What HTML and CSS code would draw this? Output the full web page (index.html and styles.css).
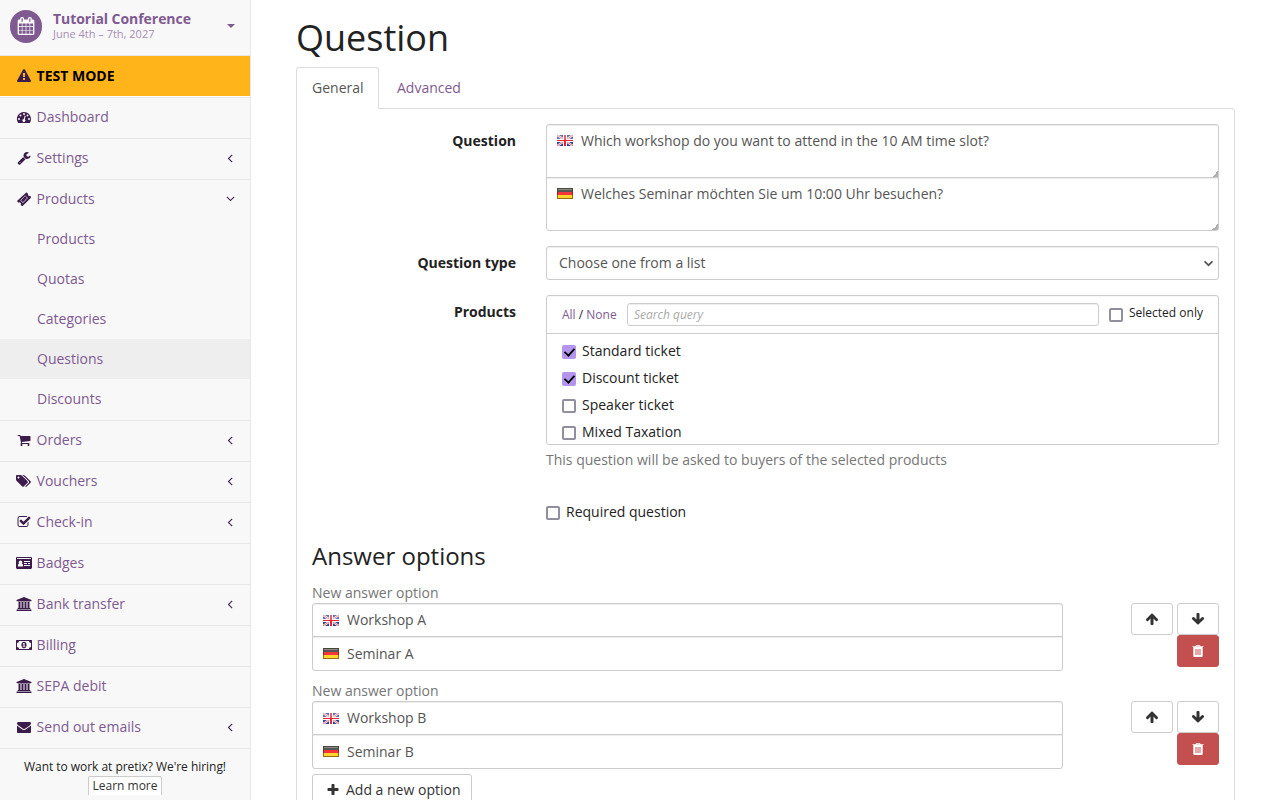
FILE: index.html
```html
<!DOCTYPE html>
<html lang="en">
<head>
<meta charset="utf-8">
<title>Question</title>
<link rel="stylesheet" href="styles.css">
</head>
<body>
<svg class="defs" aria-hidden="true">
  <symbol id="calendar" viewBox="0 0 1792 1792"><path d="M192 1664h288v-288h-288v288zm352 0h320v-288h-320v288zm-352-352h288v-320h-288v320zm352 0h320v-320h-320v320zm-352-384h288v-288h-288v288zm736 736h320v-288h-320v288zm-384-736h320v-288h-320v288zm768 736h288v-288h-288v288zm-384-352h320v-320h-320v320zm-352-864v-288q0-13-9.500-22.500t-22.500-9.500h-64q-13 0-22.500 9.500t-9.500 22.500v288q0 13 9.500 22.500t22.500 9.500h64q13 0 22.500-9.500t9.500-22.500zm736 864h288v-320h-288v320zm-384-384h320v-288h-320v288zm384 0h288v-288h-288v288zm32-480v-288q0-13-9.500-22.500t-22.500-9.500h-64q-13 0-22.500 9.500t-9.500 22.500v288q0 13 9.500 22.500t22.500 9.500h64q13 0 22.500-9.500t9.500-22.500zm384-64v1280q0 52-38 90t-90 38h-1408q-52 0-90-38t-38-90v-1280q0-52 38-90t90-38h128v-96q0-66 47-113t113-47h64q66 0 113 47t47 113v96h384v-96q0-66 47-113t113-47h64q66 0 113 47t47 113v96h128q52 0 90 38t38 90z"/></symbol>
  <symbol id="warning" viewBox="0 0 1792 1792"><path d="M1024 1375v-190q0-14-9.500-23.500t-22.500-9.500h-192q-13 0-22.500 9.500t-9.500 23.500v190q0 14 9.500 23.500t22.500 9.500h192q13 0 22.500-9.500t9.500-23.500zm-2-374l18-459q0-12-10-19-13-11-24-11h-220q-11 0-24 11-10 7-10 21l17 457q0 10 10 16.500t24 6.500h185q14 0 23.500-6.500t10.500-16.500zm-14-934l768 1408q35 63-2 126-17 29-46.500 46t-63.500 17h-1536q-34 0-63.500-17t-46.500-46q-37-63-2-126l768-1408q17-31 47-49t65-18 65 18 47 49z"/></symbol>
  <symbol id="gauge" viewBox="0 0 14 14"><path fill-rule="evenodd" d="M7 2a7 7 0 0 1 7 7c0 1.400-.4 2.600-1 3.700-.1.200-.3.300-.5.300h-11c-.2 0-.4-.1-.5-.3A7 7 0 0 1 7 2zM2 8a1 1 0 1 0 0 2 1 1 0 0 0 0-2zM3.500 4.500a1 1 0 1 0 0 2 1 1 0 0 0 0-2zM7 3a1 1 0 1 0 0 2 1 1 0 0 0 0-2zM10.500 4.500a1 1 0 1 0 0 2 1 1 0 0 0 0-2zM12 8a1 1 0 1 0 0 2 1 1 0 0 0 0-2zM7.600 5.900l-.8 3.100a1.500 1.500 0 1 0 1 .3l.8-3.100c.1-.7-.9-.9-1-.3z"/></symbol>
  <symbol id="wrench" viewBox="0 0 1792 1792"><path d="M448 1472q0-26-19-45t-45-19-45 19-19 45 19 45 45 19 45-19 19-45zm644-420l-682 682q-37 37-90 37-52 0-91-37l-106-108q-38-36-38-90 0-53 38-91l681-681q39 98 114.500 173.500t173.500 114.500zm634-435q0 39-23 106-47 134-164.500 217.500t-258.500 83.500q-185 0-316.500-131.500t-131.500-316.500 131.500-316.500 316.500-131.500q58 0 121.500 16.500t107.500 46.500q16 11 16 28t-16 28l-293 169v224l193 107q5-3 79-48.500t135.500-81 70.500-35.500q15 0 23.500 10t8.500 25z"/></symbol>
  <symbol id="ticket" viewBox="0 0 14 14"><path fill-rule="evenodd" d="M8.700.9c.4-.4 1-.4 1.400 0l1 1a1.500 1.500 0 0 0 2 2l.6.7c.4.400.4 1 0 1.400l-7.800 7.800c-.4.400-1 .4-1.400 0l-.9-1a1.500 1.500 0 0 0-2.100-2.100l-1-.9c-.4-.4-.4-1 0-1.400zM8.200 3.400L3.300 8.300l2.600 2.600L10.800 6zM8.200 4.100L10.100 6l-4.200 4.200L4 8.300z"/></symbol>
  <symbol id="cart" viewBox="0 0 1792 1792"><path d="M704 1536q0 52-38 90t-90 38-90-38-38-90 38-90 90-38 90 38 38 90zm896 0q0 52-38 90t-90 38-90-38-38-90 38-90 90-38 90 38 38 90zm128-1088v512q0 24-16.500 42.500t-40.500 21.500l-1044 122q13 60 13 70 0 16-24 64h920q26 0 45 19t19 45-19 45-45 19h-1024q-26 0-45-19t-19-45q0-11 8-31.500t16-36 21.500-40 15.500-29.500l-177-823h-204q-26 0-45-19t-19-45 19-45 45-19h256q16 0 28.500 6.500t19.500 15.500 13 24.500 8 26 5.500 29.500 4.500 26h1201q26 0 45 19t19 45z"/></symbol>
  <symbol id="tags" viewBox="0 0 1920 1792"><path d="M384 448q0-53-37.500-90.500t-90.500-37.500-90.500 37.500-37.500 90.500 37.500 90.500 90.500 37.500 90.500-37.500 37.500-90.500zm1067 576q0 53-37 90l-491 492q-39 37-91 37-53 0-90-37l-715-716q-38-37-64.500-101t-26.500-117v-416q0-52 38-90t90-38h416q53 0 117 26.500t102 64.500l715 714q37 39 37 91zm384 0q0 53-37 90l-491 492q-39 37-91 37-36 0-59-14t-53-45l470-470q37-37 37-90 0-52-37-91l-715-714q-38-38-102-64.500t-117-26.500h224q53 0 117 26.500t102 64.500l715 714q37 39 37 91z"/></symbol>
  <symbol id="check" viewBox="0 0 1792 1792"><path d="M1472 930v318q0 119-84.500 203.500t-203.500 84.500h-832q-119 0-203.500-84.500t-84.500-203.500v-832q0-119 84.500-203.500t203.500-84.500h832q63 0 117 25 15 7 18 23 3 17-9 29l-49 49q-10 10-23 10-3 0-9-2-23-6-45-6h-832q-66 0-113 47t-47 113v832q0 66 47 113t113 47h832q66 0 113-47t47-113v-254q0-13 9-22l64-64q10-10 23-10 6 0 12 3 20 8 20 29zm231-489l-814 814q-24 24-57 24t-57-24l-430-430q-24-24-24-57t24-57l110-110q24-24 57-24t57 24l263 263 647-647q24-24 57-24t57 24l110 110q24 24 24 57t-24 57z"/></symbol>
  <symbol id="idcard" viewBox="0 0 16 14"><path fill-rule="evenodd" d="M1.200 1h13.600c.7 0 1.200.5 1.200 1.200v9.600c0 .7-.5 1.200-1.200 1.200H1.200C.5 13 0 12.500 0 11.800V2.200C0 1.500.5 1 1.200 1zM1 2v1h14V2zM2 10.500h5c.2-1.600-.2-2.700-1.200-2.900a1.800 1.800 0 1 0-2.600 0C2.200 7.800 1.800 8.900 2 10.500zM8 5v1h6V5zM8 7v1h3V7zM12 7v1h2V7zM8 9v1h6V9z"/></symbol>
  <symbol id="bank" viewBox="0 0 15 14"><path d="M7.500 0L15 3v1h-1v.5H1V4H0V3zM2 5h2v6h1V5h2v6h1V5h2v6h1V5h2v6h.500l.5.500v.5H1v-.5l.5-.5H2zM.5 12.500h14l.5.500v1H0v-1z"/></symbol>
  <symbol id="money" viewBox="0 0 16 14"><path fill-rule="evenodd" d="M.5 2h15c.3 0 .5.200.5.500v9c0 .3-.2.500-.5.500H.5c-.3 0-.5-.2-.5-.5v-9c0-.3.200-.5.500-.5zM3 3a2 2 0 0 1-2 2v4a2 2 0 0 1 2 2h10a2 2 0 0 1 2-2V5a2 2 0 0 1-2-2zM8 3.800c1.600 0 2.600 1.500 2.600 3.200S9.600 10.200 8 10.200 5.400 8.700 5.400 7 6.400 3.800 8 3.800zM7.600 5l-1 1 .5.500.4-.3V8h-.8v.8H9.300V8h-.7V5z"/></symbol>
  <symbol id="mail" viewBox="0 0 1792 1792"><path d="M1792 710v794q0 66-47 113t-113 47h-1472q-66 0-113-47t-47-113v-794q44 49 101 87 362 246 497 345 57 42 92.500 65.500t94.500 48 110 24.500h2q51 0 110-24.500t94.500-48 92.500-65.500q170-123 498-345 57-39 100-87zm0-294q0 79-49 151t-122 123q-376 261-468 325-10 7-42.500 31t-54 38.500-52 32.500-57.500 27-50 9h-2q-23 0-50-9t-57.500-27-52-32.500-54-38.500-42.500-31q-91-64-262-182.500t-205-142.500q-62-42-117-115.500t-55-136.500q0-78 41.500-130t118.500-52h1472q65 0 112.500 47t47.500 113z"/></symbol>
  <symbol id="angle" viewBox="0 0 1792 1792"><path d="M1203 544q0 13-10 23l-393 393 393 393q10 10 10 23t-10 23l-50 50q-10 10-23 10t-23-10l-466-466q-10-10-10-23t10-23l466-466q10-10 23-10t23 10l50 50q10 10 10 23z"/></symbol>
  <symbol id="up" viewBox="0 0 1792 1792"><path d="M1675 971q0 51-37 90l-75 75q-38 38-91 38-54 0-90-38l-294-293v704q0 52-37.500 84.500t-90.500 32.500h-128q-53 0-90.500-32.500t-37.500-84.500v-704l-294 293q-36 38-90 38t-90-38l-75-75q-38-38-38-90 0-53 38-91l651-651q35-37 90-37 54 0 91 37l651 651q37 39 37 91z"/></symbol>
  <symbol id="down" viewBox="0 0 1792 1792"><path d="M1675 832q0 53-37 90l-651 652q-39 37-91 37-53 0-90-37l-651-652q-38-36-38-90 0-53 38-91l74-75q39-37 91-37 53 0 90 37l294 294v-704q0-52 38-90t90-38h128q52 0 90 38t38 90v704l294-294q37-37 90-37 52 0 91 37l75 75q37 39 37 91z"/></symbol>
  <symbol id="plus" viewBox="0 0 1792 1792"><path d="M1600 736v192q0 40-28 68t-68 28h-416v416q0 40-28 68t-68 28h-192q-40 0-68-28t-28-68v-416h-416q-40 0-68-28t-28-68v-192q0-40 28-68t68-28h416v-416q0-40 28-68t68-28h192q40 0 68 28t28 68v416h416q40 0 68 28t28 68z"/></symbol>
  <symbol id="trash" viewBox="0 0 14 14"><path fill-rule="evenodd" d="M5.300 1h3.400l.9 1.200h2.900v.9h-.8v9c0 .6-.4.900-.9.900H3.200c-.5 0-.9-.3-.9-.9v-9h-.8v-.9h2.900zM5.700 1.700l-.4.500h3.400l-.4-.5z"/><path d="M4 5h6v6H4z" fill="#e4a9a9"/></symbol>
  <symbol id="gb" viewBox="0 0 16 11"><path fill="#2b3f9b" d="M0 0h16v11H0z"/><path stroke="#fff" stroke-width="2.200" d="M0 0l16 11M16 0L0 11"/><path stroke="#e8414a" stroke-width=".8" d="M0 0l16 11M16 0L0 11"/><path fill="#fff" d="M6 0h4v11H6zM0 4h16v3H0z"/><path fill="#e9252f" d="M7 0h2v11H7zM0 5h16v1H0z"/><path fill="#fff" opacity=".25" d="M0 0h16v5H0z"/></symbol>
  <symbol id="de" viewBox="0 0 16 11"><path fill="#4a4738" d="M0 0h16v4H0z"/><path fill="#8f2418" d="M0 4h16v3H0z"/><path fill="#9a6c12" d="M0 7h16v4H0z"/><path fill="#8b8b84" d="M1 1h14v1H1z"/><path fill="#555" d="M1 2h14v2H1z"/><path fill="#f5343a" d="M1 4h14v3H1z"/><path fill="#ffd42c" d="M1 7h14v3H1z"/></symbol>
</svg>
<div class="layout">
  <aside class="sidebar">
    <a class="event">
      <span class="event-badge"><svg class="event-icon"><use href="#calendar"/></svg></span>
      <span class="event-text"><strong class="event-name">Tutorial Conference</strong><span class="event-date">June 4th – 7th, 2027</span></span>
      <span class="caret"></span>
    </a>
    <a class="testmode"><svg class="icon"><use href="#warning"/></svg>TEST MODE</a>
    <nav class="nav">
      <a class="item"><svg class="icon"><use href="#gauge"/></svg>Dashboard</a>
      <a class="item"><svg class="icon"><use href="#wrench"/></svg>Settings<svg class="arrow"><use href="#angle"/></svg></a>
      <a class="item open"><svg class="icon"><use href="#ticket"/></svg>Products<svg class="arrow expanded"><use href="#angle"/></svg></a>
      <div class="submenu">
        <a class="sub">Products</a>
        <a class="sub">Quotas</a>
        <a class="sub">Categories</a>
        <a class="sub active">Questions</a>
        <a class="sub">Discounts</a>
      </div>
      <a class="item"><svg class="icon"><use href="#cart"/></svg>Orders<svg class="arrow"><use href="#angle"/></svg></a>
      <a class="item"><svg class="icon"><use href="#tags"/></svg>Vouchers<svg class="arrow"><use href="#angle"/></svg></a>
      <a class="item"><svg class="icon"><use href="#check"/></svg>Check-in<svg class="arrow"><use href="#angle"/></svg></a>
      <a class="item"><svg class="icon"><use href="#idcard"/></svg>Badges</a>
      <a class="item"><svg class="icon"><use href="#bank"/></svg>Bank transfer<svg class="arrow"><use href="#angle"/></svg></a>
      <a class="item"><svg class="icon"><use href="#money"/></svg>Billing</a>
      <a class="item"><svg class="icon"><use href="#bank"/></svg>SEPA debit</a>
      <a class="item"><svg class="icon"><use href="#mail"/></svg>Send out emails<svg class="arrow"><use href="#angle"/></svg></a>
    </nav>
    <div class="hiring"><span class="hiring-text">Want to work at pretix? We're hiring!</span><span class="learn">Learn more</span></div>
  </aside>
  <main class="main">
    <h1 class="title">Question</h1>
    <div class="tabs"><a class="tab current">General</a><a class="tab">Advanced</a></div>
    <form class="pane">
      <div class="row">
        <label class="label">Question</label>
        <div class="stack">
          <div class="lang"><svg class="flag"><use href="#gb"/></svg><textarea class="control area">Which workshop do you want to attend in the 10 AM time slot?</textarea></div>
          <div class="lang"><svg class="flag"><use href="#de"/></svg><textarea class="control area">Welches Seminar möchten Sie um 10:00 Uhr besuchen?</textarea></div>
        </div>
      </div>
      <div class="row">
        <label class="label">Question type</label>
        <div class="control select"><span>Choose one from a list</span><svg class="chevron" viewBox="0 0 8 6"><path d="M.5 1L4 4.500 7.500 1"/></svg></div>
      </div>
      <div class="row products">
        <label class="label">Products</label>
        <div class="field">
          <div class="picker">
            <div class="picker-head">
              <span class="links"><a class="link">All</a> / <a class="link">None</a></span>
              <input class="search" placeholder="Search query">
              <label class="only"><input type="checkbox" class="box">Selected only</label>
            </div>
            <div class="choices">
              <label class="choice"><input type="checkbox" class="box" checked>Standard ticket</label>
              <label class="choice"><input type="checkbox" class="box" checked>Discount ticket</label>
              <label class="choice"><input type="checkbox" class="box">Speaker ticket</label>
              <label class="choice"><input type="checkbox" class="box">Mixed Taxation</label>
            </div>
          </div>
          <div class="help">This question will be asked to buyers of the selected products</div>
          <label class="choice required"><input type="checkbox" class="box">Required question</label>
        </div>
      </div>
      <h2 class="subtitle">Answer options</h2>
      <div class="answer">
        <div class="answer-fields">
          <div class="muted">New answer option</div>
          <div class="lang"><svg class="flag"><use href="#gb"/></svg><input class="control" value="Workshop A"></div>
          <div class="lang"><svg class="flag"><use href="#de"/></svg><input class="control" value="Seminar A"></div>
        </div>
        <div class="actions">
          <span class="btn"><svg class="glyph"><use href="#up"/></svg></span><span class="btn"><svg class="glyph"><use href="#down"/></svg></span>
          <span class="btn danger"><svg class="glyph"><use href="#trash"/></svg></span>
        </div>
      </div>
      <div class="answer">
        <div class="answer-fields">
          <div class="muted">New answer option</div>
          <div class="lang"><svg class="flag"><use href="#gb"/></svg><input class="control" value="Workshop B"></div>
          <div class="lang"><svg class="flag"><use href="#de"/></svg><input class="control" value="Seminar B"></div>
        </div>
        <div class="actions">
          <span class="btn"><svg class="glyph"><use href="#up"/></svg></span><span class="btn"><svg class="glyph"><use href="#down"/></svg></span>
          <span class="btn danger"><svg class="glyph"><use href="#trash"/></svg></span>
        </div>
      </div>
      <span class="add"><svg class="glyph"><use href="#plus"/></svg>Add a new option</span>
    </form>
  </main>
</div>
</body>
</html>
```
FILE: styles.css
```css
* { box-sizing: border-box; }
body { margin: 0; font: 14px/20px "Open Sans", sans-serif; color: #222; background: #fff; }
a { color: #7f5a91; text-decoration: none; }
.defs { display: none; }
svg { fill: currentColor; flex: none; }
.layout { display: flex; height: 800px; overflow: hidden; }

.sidebar { width: 251px; flex: none; background: #f8f8f8; border-right: 1px solid #e7e7e7; overflow: hidden; }
.event { display: flex; align-items: center; height: 55px; padding: 0 15px 2px 9.500px; }
.event-badge { display: flex; width: 32.500px; height: 32.500px; border-radius: 50%; background: #7f5a91; align-items: center; justify-content: center; }
.event-icon { width: 18px; height: 18px; color: #fff; margin-bottom: 1px; }
.event-text { display: flex; flex-direction: column; margin: 0 0 2px 11px; flex: 1; }
.event-name { line-height: 17px; letter-spacing: -.05px; }
.event-date { font-size: 11px; line-height: 14px; color: #a98fb6; }
.caret { border: 4px solid transparent; border-top-color: #7f5a91; border-bottom: 0; margin-bottom: 1px; }
.testmode { display: flex; align-items: center; height: 42px; padding: 0 15px; background: #ffb419; border-top: 1px solid #e7e7e7; border-bottom: 1px solid #fff; color: #000; font-weight: 700; }
.icon { width: 18px; height: 14px; margin-right: 3.600px; color: #3b1c4a; }
.item { display: flex; align-items: center; height: 41px; padding: 0 13px 2px 15px; border-top: 1px solid #e7e7e7; }
.open { height: 40px; padding-bottom: 1px; }
.arrow { width: 14px; height: 14px; margin-left: auto; color: #3b1c4a; }
.expanded { transform: rotate(-90deg); }
.submenu { padding-bottom: 1px; }
.sub { display: block; height: 40px; padding: 10px 0 10px 37px; }
.active { background: #eee; }
.hiring { display: flex; flex-direction: column; align-items: center; height: 47px; border-top: 1px solid #e7e7e7; padding-top: 8px; font-size: 12px; overflow: hidden; }
.hiring-text { letter-spacing: -.04px; }
.learn { background: #fff; border: 1px solid #ccc; border-radius: 2px; padding: 0 3.500px; height: 22px; line-height: 18px; flex: none; margin-top: -1px; color: #333; }

.main { flex: 1; padding: 18px 45px 0; }
.title { margin: 0 0 9px; font-size: 36px; line-height: 40px; font-weight: 400; }
.tabs { display: flex; gap: 1px; }
.tab { height: 41px; padding: 10px 16px; border: 1px solid transparent; }
.current { width: 83px; height: 42px; padding: 10px 15px; border-color: #ddd; border-bottom: 0; border-radius: 3px 3px 0 0; background: #fff; color: #555; position: relative; }
.pane { margin-top: -1px; height: 800px; padding: 15px; border: 1px solid #ddd; border-radius: 0 3px 0 0; }
.row { display: grid; grid-template-columns: 204px 673px; column-gap: 30px; margin-bottom: 15px; }
.label { font-weight: 700; text-align: right; padding-top: 7px; }
.lang { position: relative; }
.lang + .lang { margin-top: -1px; }
.flag { position: absolute; left: 11px; top: 12px; width: 16px; height: 11px; z-index: 1; }
.control { display: block; width: 100%; height: 34px; margin: 0; padding: 5px 12px 7px 34px; border: 1px solid #ccc; border-radius: 3px; background: #fff; color: #555; font: inherit; box-shadow: inset 0 1px 1px rgba(0,0,0,.075); }
.area { height: 54px; padding-top: 6px; overflow: hidden; resize: vertical; }
.area::-webkit-resizer { background: linear-gradient(135deg, transparent 80%, #aaa 80%, #bbb); }
.stack .flag { top: 11px; }
.lang:not(:last-child) .control { border-bottom-left-radius: 0; border-bottom-right-radius: 0; }
.lang + .lang .control { border-top-left-radius: 0; border-top-right-radius: 0; }
.select { display: flex; justify-content: space-between; align-items: center; padding: 0 5px 0 12px; }
.chevron { width: 9px; height: 7px; fill: none; stroke: #555; stroke-width: 1.500; }
.picker { height: 150px; border: 1px solid #ccc; border-radius: 3px; overflow: hidden; box-shadow: inset 0 1px 1px rgba(0,0,0,.03); }
.picker-head { display: flex; height: 38px; border-bottom: 1px solid #ccc; padding: 7px 15px; font-size: 12px; }
.links { width: 65px; padding-top: 2px; }
.search { width: 472px; height: 23px; border: 1px solid #ccc; border-radius: 3px; padding: 0 6px; font: 12px "Open Sans", sans-serif; box-shadow: inset 0 1px 1px rgba(0,0,0,.075); }
.search::placeholder { color: #aaa; font-style: italic; }
.only { display: flex; margin-left: 10px; gap: 6px; }
.box { appearance: none; flex: none; width: 14px; height: 14px; margin: 5px 0 0; border: 2px solid #8f8f9d; border-radius: 2px; background: #fff; }
.box:checked { border: 0; background: #b395ee; display: flex; align-items: center; justify-content: center; }
.box:checked::before { content: ""; width: 9px; height: 5px; border: solid #000; border-width: 0 0 2px 2px; transform: translateY(-1.500px) rotate(-48deg) scale(.9); }
.choices { padding: 7px 15px; }
.choice { display: flex; gap: 6px; height: 27px; }
.choice .box { margin-top: 4px; }
.help { margin-top: 5px; color: #767676; }
.required { margin-top: 32px; }
.products { margin-bottom: 0; }
.subtitle { margin: 14px 0; font-size: 24px; line-height: 26px; font-weight: 400; }
.answer { display: flex; justify-content: space-between; height: 98px; }
.answer:nth-last-child(2) { height: 93px; }
.answer-fields { width: 751px; }
.muted { color: #767676; }
.answer .lang + .lang .control { height: 35px; padding: 6px 12px 6px 34px; }
.actions { display: flex; flex-wrap: wrap; align-content: flex-start; justify-content: flex-end; column-gap: 4px; width: 88px; padding-top: 20px; }
.btn { display: flex; align-items: center; justify-content: center; width: 42px; height: 32px; border: 1px solid #ccc; border-radius: 3px; color: #333; }
.glyph { width: 14px; height: 14px; }
.danger { background: #c44f4f; border-color: #c44f4f; color: #fff; }
.add { display: inline-flex; align-items: center; gap: 6px; width: 160px; height: 34px; padding: 0 0 2px 13px; border: 1px solid #ccc; border-radius: 3px; color: #333; white-space: nowrap; }
```
